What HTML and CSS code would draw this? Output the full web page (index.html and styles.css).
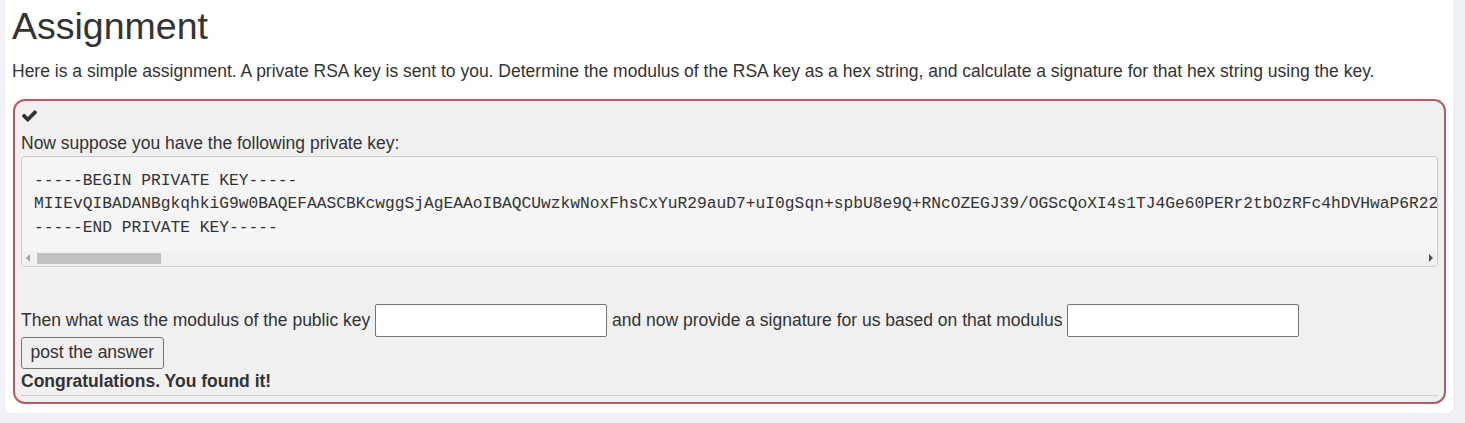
FILE: index.html
```html
<!DOCTYPE html>
<html lang="en">
<head>
<meta charset="utf-8">
<title>Assignment</title>
<link rel="stylesheet" href="styles.css">
</head>
<body>
<div class="card">
  <h1 class="title">Assignment</h1>
  <p class="intro">Here is a simple assignment. A private RSA key is sent to you. Determine the modulus of the RSA key as a hex string, and calculate a signature for that hex string using the key.</p>
  <div class="result">
    <div class="check-line"><svg class="check" viewBox="121 334 1550 1188" width="15" height="12" aria-hidden="true"><path d="M1671 566q0 40-28 68l-724 724-136 136q-28 28-68 28t-68-28l-136-136-362-362q-28-28-28-68t28-68l136-136q28-28 68-28t68 28l294 295 656-657q28-28 68-28t68 28l136 136q28 28 28 68z"/></svg></div>
    <div class="prompt">Now suppose you have the following private key:</div>
    <div class="keybox">
      <pre class="key">-----BEGIN PRIVATE KEY-----
MIIEvQIBADANBgkqhkiG9w0BAQEFAASCBKcwggSjAgEAAoIBAQCUwzkwNoxFhsCxYuR29auD7+uI0gSqn+spbU8e9Q+RNcOZEGJ39/OGScQoXI4s1TJ4Ge60PERr2tbOzRFc4hDVHwaP6R22kLq9vT3mZ8xNw1bYhR4sE7uJ0aPcD6fG2iKoVnM5lQyWtXzB8rHjS3eU1dFgA9pCYt5Rw2Nq8eLm0Xc7Vb4ZsK1dHf9Gj3Pa6Uo2Ii8TyQ5rE0wW7nBv3Mc1Xz4LkJ9hGf2Dd8Ss5AaP0oI7uU3yYtT6rRe1EwWq9QmN4bV2cC8xXz5ZlK3jJhH7gGfF0dDsSa1AqW6eRtY2uIo9Pl4KjH8gFd3SzXcV7bNm0Qw5ErT1yUi6OpAsD4fGh2JkL9zX7Cv3Bn8Mq1Wz5Ex0Rc4VtG9bYh2Nu6Jm1Ik7Ol3P0aQs8Wd5EfRg2Th6Yj9UkI4oLp+Zx/Cv7BnM3aS1dF8gH5jK0lQ9wErT2yU6iO4pAz7Xs+Dc3VfB1gN8hM5jK0lP2mN9bV4cX7zL1kJ8hG5fD3sA0pO6iU9yT2rE5wQ8aZ1sX4dC7fV0gB3hN6jM9kL2Qw3Er8Ty1Ui6Op0As5Df9Gh2Jk7Lz4Xc1Vb6Nm+Q3aW8sE2dR5fT0gY7hU4jI1kO8lP5zA2xS9cD6vF3bG0nH7mJ4qK1wL8eR5tY2uI9oP6aS3dF0gH7jK4lZ1xC8vB5nM2qW9eR6tY3uI0oP7aS4dF1gH8jK5lZ2xC9vB6nM3qW0eR7tY4uI1oP8aS5dF2gHx4KpQ9sVb2Wn7Ty0Lm5Rc8Ju3Fd6Ae1Zg9Oi4Xk7Ys2Pv5Nb0Qt3Mh8Dw1EuC6rFj0Gl5Sa9Kz2Xq7Bn4Hv1Tm8Ry3Ue6Wi0Op5Ac9DsL2Fg7Jk4Zx1Cv8Bn3Mq6Wy0+Nk3Pm7Lo1Iu5Yt9Re2Wq6Az0Sx4Dc8Fv2Gb6Hn0Jm4Kl8Po2Iu6Yt0Re4Wq8Az2Sx6Dc0Fv4Gb8Hn2Jm6Kl0Po4Iu8Yt2Re6Wq0Az4Sx8Dc2Fv6Gb0Hn4Jm8Kl2Po6ItM3eR7wQ1zX5cV9bN3mK7jH1gF5dS9aP3oI7uY1tR5eW9qA3zS7xD1cF5vG9bH3nJ7mK1lO5pI9uY3tR7eW1qA5zS9xD3cF7vG1bH5nJ9mK3lO7pI1uY5tR9eW3qA7zS1xD5cF9vG3bH7nJ1mK5lO9pI3uY7tR1eW5qA9zS3xD7cF1vG5bH9nJ3mK7lO1pI5Vd8Qe2Nf6Mg0Lh4Ki8Jj2Ik6Hl0Gm4Fn8Eo2Dp6Cq0Br4As8Zt2Yu6Xv0Ww4Vx8Uy2Tz6S0aR4bQ8cP2dO6eN0fM4gL8hK2iJ6jI0kH4lG8mF2nE6oD0pC4qB8rA2s+6Mk5Nj9Oh3Pg7Qf1Re5Sd9Tc3Ub7Va1WZ5Xy9Yx3Zw7av1bu5ct9ds3er7fq1gp5ho9in3jm7kl1lk5mj9ni3oh7pg1qf5re9sd3tc7ub1va5wZ9xY3yX7zW1AV5BU9CT3DS7ER1FQ5GP9HO3IN7JM1KL5LK9MJ3NI7OH1PG5QF9RE3SD7TC1UB5VA9W0Xz4Yy8Zx2av6bu0ct4ds8er2fq6gp0ho4in8jm2kl6lk0mj4ni8oh2pg6qf0re4sd8tcYnZ4
-----END PRIVATE KEY-----
</pre>
      <div class="hscroll" aria-hidden="true">
        <span class="sb-btn"><span class="tri tri-left"></span></span>
        <span class="sb-track"><span class="sb-thumb"></span></span>
        <span class="sb-btn"><span class="tri tri-right"></span></span>
      </div>
    </div>
    <div class="answer">Then what was the modulus of the public key <input class="field" type="text"> and now provide a signature for us based on that modulus <input class="field" type="text"></div>
    <div class="actions"><button class="post" type="button">post the answer</button></div>
    <div class="congrats">Congratulations. You found it!</div>
    <hr class="rule">
  </div>
</div>
</body>
</html>
```
FILE: styles.css
```css
html, body {
  margin: 0;
  padding: 0;
}
body {
  background: #f0f0f6;
  font-family: "Liberation Sans", Arial, sans-serif;
  font-size: 17.5px;
  line-height: 1.42857;
  color: #333;
}
.card {
  margin: 0 12px 0 5px;
  background: #fff;
  border-radius: 0 0 6px 6px;
  padding: 6px 7px 9px 7px;
}
.title {
  margin: 0 0 12px;
  font-size: 37.5px;
  font-weight: normal;
  line-height: 1.1;
}
.intro {
  margin: 0 0 15px;
}
.result {
  border: 2px solid #b65c63;
  border-radius: 12px;
  background: #f0f0f0;
  padding: 5px 6px 6px 6px;
  margin-left: 1px;
}
.check-line {
  height: 25px;
  display: flex;
  align-items: flex-start;
  padding-top: 4px;
  box-sizing: border-box;
}
.check {
  display: block;
  margin-left: 1px;
  fill: #333;
}
.keybox {
  border: 1px solid #ccc;
  border-radius: 4px;
  background: #f5f5f5;
  overflow: hidden;
}
.key {
  margin: 0;
  padding: 12px 12px 12px;
  font-family: "Liberation Mono", "Courier New", monospace;
  font-size: 16.25px;
  line-height: 1.42857;
  color: #333;
  overflow: hidden;
  white-space: pre;
}
.hscroll {
  display: flex;
  height: 15px;
  background: #f1f1f1;
}
.sb-btn {
  flex: none;
  width: 15px;
  height: 15px;
  display: flex;
  align-items: center;
  justify-content: center;
}
.tri {
  width: 0;
  height: 0;
  border-top: 4px solid transparent;
  border-bottom: 4px solid transparent;
}
.tri-left {
  border-right: 4px solid #a3a3a3;
  margin-left: -3px;
}
.tri-right {
  border-left: 4px solid #505050;
  margin-left: 3px;
}
.sb-track {
  flex: 1;
  display: flex;
  align-items: center;
}
.sb-thumb {
  width: 124px;
  height: 11px;
  background: #c1c1c1;
}
.answer {
  margin-top: 37px;
}
.field {
  box-sizing: border-box;
  width: 232px;
  height: 33px;
  border: 1px solid #767676;
  border-radius: 2px;
  background: #fff;
  font: inherit;
  padding: 1px 4px;
  margin: 0;
  vertical-align: baseline;
}
.actions {
  display: flex;
}
.post {
  font-family: inherit;
  font-size: 17.5px;
  line-height: 21px;
  padding: 4px 8.5px 5px;
  border: 1px solid #767676;
  border-radius: 3px;
  background: #efefef;
  color: #333;
  margin: 0;
}
.congrats {
  font-weight: bold;
}
.rule {
  margin: 1px 0 0;
  border: 0;
  border-top: 1px solid #ccc;
  height: 0;
}
```
